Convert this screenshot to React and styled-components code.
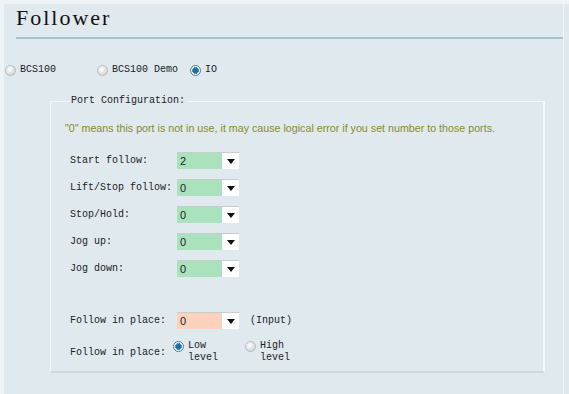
import React from "react";
import styled, { createGlobalStyle } from "styled-components";

const Global = createGlobalStyle`
  html, body { margin: 0; padding: 0; background: #dfe9ee; }
  body { width: 569px; height: 394px; overflow: hidden; }
`;

const serif = `"Liberation Serif", "Times New Roman", serif`;
const mono = `"Liberation Mono", "DejaVu Sans Mono", monospace`;

const Page = styled.div`
  box-sizing: border-box;
  width: 569px;
  height: 394px;
  border-top: 4px solid #eef4f6;
  border-left: 4px solid #eef4f6;
  background: #dfe9ee;
`;

const Panel = styled.div`
  box-sizing: border-box;
  width: 560px;
  height: 390px;
  border-right: 1px solid #eef5f4;
  display: flex;
  flex-direction: column;
`;

const Title = styled.h1`
  margin: 0;
  padding: 3px 0 0 12px;
  height: 30px;
  box-sizing: border-box;
  font-family: ${serif};
  font-size: 22px;
  font-weight: normal;
  line-height: 22px;
  color: #111;
  letter-spacing: 2px;
`;

const Rule = styled.div`
  margin: 3px 0 0 12px;
  height: 2px;
  background: #a3c3c4;
`;

const ModeRow = styled.div`
  display: flex;
  align-items: center;
  margin-top: 24px;
  padding-left: 1px;
  height: 14px;
`;

const RadioLabel = styled.label`
  display: flex;
  align-items: ${(p) => (p.$top ? "flex-start" : "center")};
  gap: 4px;
  width: ${(p) => p.$w || "auto"};
  font-family: ${mono};
  font-size: 10px;
  line-height: 12px;
  color: #222;
`;

const Dot = styled.span`
  flex: none;
  box-sizing: border-box;
  width: 11px;
  height: 11px;
  border-radius: 50%;
  margin-top: ${(p) => (p.$top ? "1px" : "0")};
  border: 1px solid ${(p) => (p.$on ? "#5c7a8c" : "#b7bdc0")};
  background: ${(p) =>
    p.$on
      ? "radial-gradient(circle, #1d6fa8 0 2.4px, #4d93c2 2.6px 3.2px, #e9f1f6 3.4px)"
      : "radial-gradient(circle at 40% 35%, #ffffff 0, #e4e6e7 45%, #c6cacc 100%)"};
`;

const Fieldset = styled.fieldset`
  margin: 18px 0 0 46px;
  width: 495px;
  box-sizing: border-box;
  height: 278px;
  padding: 0 0 0 14px;
  border: 1px solid #f2f7f8;
  border-bottom: 2px solid #c9d9dc;
  border-right: 2px solid #f5f9fa;
`;

const Legend = styled.legend`
  font-family: ${mono};
  font-size: 10px;
  color: #222;
  padding: 0 2px;
  margin-left: 4px;
  line-height: 12px;
`;

const Note = styled.p`
  margin: 15px 0 0 0;
  font-family: "Liberation Sans", Arial, sans-serif;
  font-size: 10.7px;
  line-height: 13px;
  color: #8a8c22;
  white-space: nowrap;
`;

const Grid = styled.div`
  display: grid;
  grid-template-columns: 107px auto;
  row-gap: ${(p) => p.$gap || "10px"};
  align-items: center;
  margin: ${(p) => p.$m || "0"};
  padding-left: 5px;
`;

const Label = styled.span`
  font-family: ${mono};
  font-size: 10px;
  color: #222;
  white-space: nowrap;
`;

const SelectBox = styled.div`
  display: flex;
  align-items: stretch;
  width: 62px;
  height: 17px;
  border-top: 1px solid #c7cccc;
  box-sizing: border-box;
  background: #fff;
`;

const SelectValue = styled.span`
  width: 45px;
  background: ${(p) => (p.$warn ? "#fdd2bd" : "#a9e2bc")};
  font-family: "Liberation Sans", Arial, sans-serif;
  font-size: 11px;
  line-height: 16px;
  padding-left: 3px;
  box-sizing: border-box;
  color: #222;
`;

const Arrow = styled.span`
  flex: 1;
  display: flex;
  align-items: center;
  justify-content: center;
`;

const Inline = styled.div`
  display: flex;
  align-items: center;
  gap: ${(p) => p.$gap || "10px"};
`;

const LevelRow = styled.div`
  display: flex;
  align-items: flex-start;
  margin-left: -4px;
`;

function Select({ value, warn }) {
  return (
    <SelectBox>
      <SelectValue $warn={warn}>{value}</SelectValue>
      <Arrow>
        <svg width="8" height="5" viewBox="0 0 8 5">
          <path d="M0 0 H8 L4 5 Z" fill="#111" />
        </svg>
      </Arrow>
    </SelectBox>
  );
}

const ports = [
  ["Start follow:", "2"],
  ["Lift/Stop follow:", "0"],
  ["Stop/Hold:", "0"],
  ["Jog up:", "0"],
  ["Jog down:", "0"],
];

export default function App() {
  return (
    <>
      <Global />
      <Page>
        <Panel>
          <Title>Follower</Title>
          <Rule />
          <ModeRow>
            <RadioLabel $w="92px">
              <Dot /> BCS100
            </RadioLabel>
            <RadioLabel $w="93px">
              <Dot /> BCS100 Demo
            </RadioLabel>
            <RadioLabel>
              <Dot $on /> IO
            </RadioLabel>
          </ModeRow>
          <Fieldset>
            <Legend>Port Configuration:</Legend>
            <Note>
              "0" means this port is not in use, it may cause logical error if you set number to those ports.
            </Note>
            <Grid $gap="10px" $m="17px 0 0 0">
              {ports.map(([l, v]) => (
                <React.Fragment key={l}>
                  <Label>{l}</Label>
                  <Select value={v} />
                </React.Fragment>
              ))}
            </Grid>
            <Grid $gap="11px" $m="35px 0 0 0">
              <Label>Follow in place:</Label>
              <Inline $gap="11px">
                <Select value="0" warn />
                <Label>(Input)</Label>
              </Inline>
              <Label>Follow in place:</Label>
              <LevelRow>
                <RadioLabel $w="72px" $top>
                  <Dot $on $top />
                  <span>
                    Low
                    <br />
                    level
                  </span>
                </RadioLabel>
                <RadioLabel $top>
                  <Dot $top />
                  <span>
                    High
                    <br />
                    level
                  </span>
                </RadioLabel>
              </LevelRow>
            </Grid>
          </Fieldset>
        </Panel>
      </Page>
    </>
  );
}
